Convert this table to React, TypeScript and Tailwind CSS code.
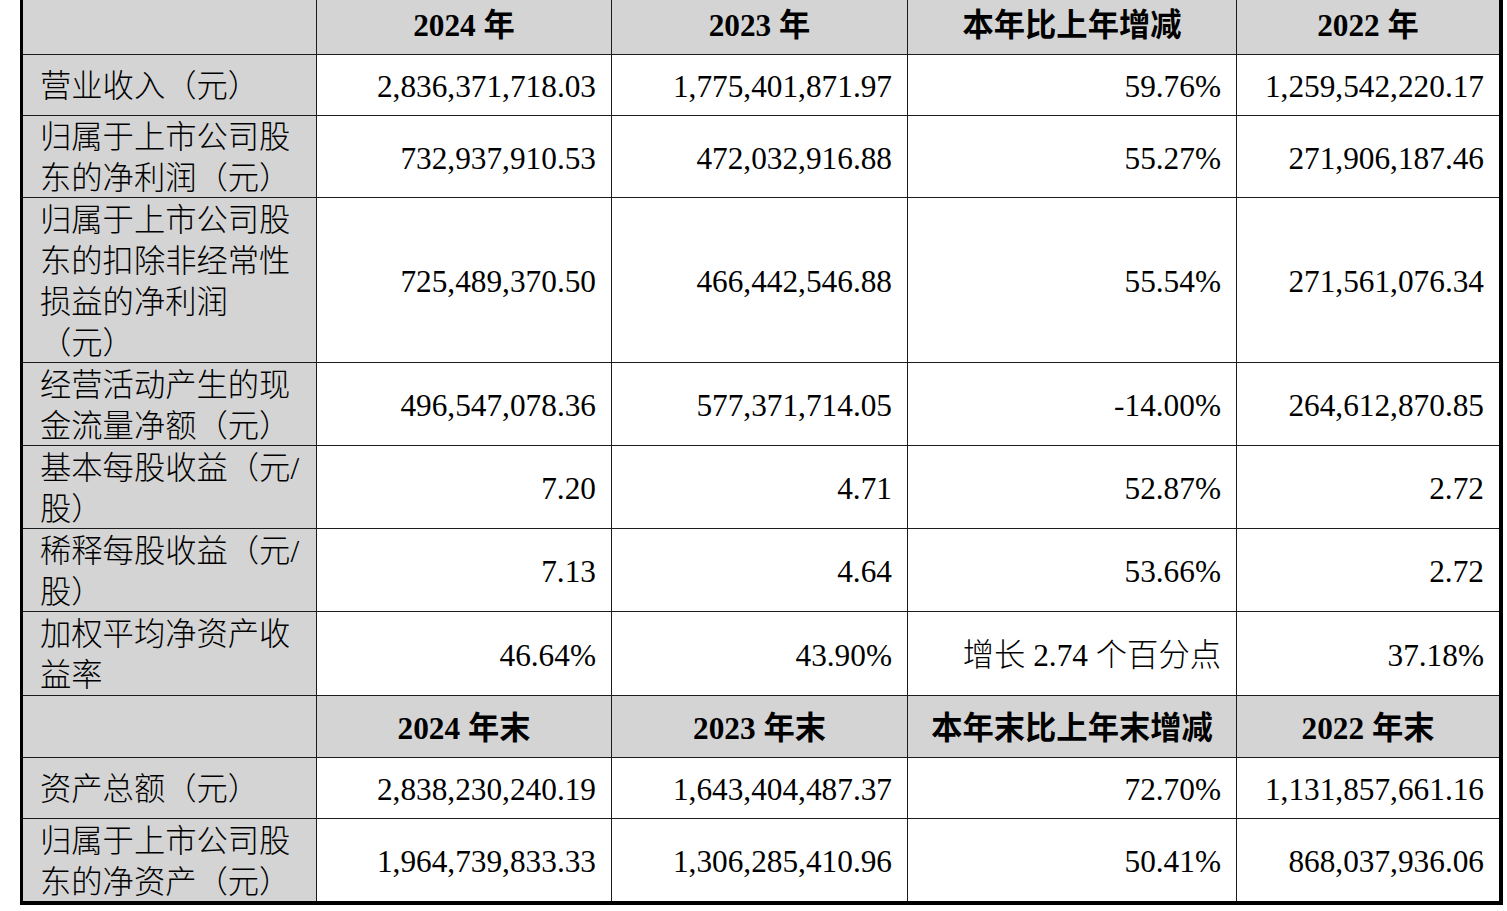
import React from "react";

type Row = {
  label: string[];
  values: string[];
  header?: boolean;
};

const rows: Row[] = [
  { label: [""], values: ["2024 年", "2023 年", "本年比上年增减", "2022 年"], header: true },
  { label: ["营业收入（元）"], values: ["2,836,371,718.03", "1,775,401,871.97", "59.76%", "1,259,542,220.17"] },
  { label: ["归属于上市公司股", "东的净利润（元）"], values: ["732,937,910.53", "472,032,916.88", "55.27%", "271,906,187.46"] },
  {
    label: ["归属于上市公司股", "东的扣除非经常性", "损益的净利润", "（元）"],
    values: ["725,489,370.50", "466,442,546.88", "55.54%", "271,561,076.34"],
  },
  { label: ["经营活动产生的现", "金流量净额（元）"], values: ["496,547,078.36", "577,371,714.05", "-14.00%", "264,612,870.85"] },
  { label: ["基本每股收益（元/", "股）"], values: ["7.20", "4.71", "52.87%", "2.72"] },
  { label: ["稀释每股收益（元/", "股）"], values: ["7.13", "4.64", "53.66%", "2.72"] },
  { label: ["加权平均净资产收", "益率"], values: ["46.64%", "43.90%", "增长 2.74 个百分点", "37.18%"] },
  { label: [""], values: ["2024 年末", "2023 年末", "本年末比上年末增减", "2022 年末"], header: true },
  { label: ["资产总额（元）"], values: ["2,838,230,240.19", "1,643,404,487.37", "72.70%", "1,131,857,661.16"] },
  { label: ["归属于上市公司股", "东的净资产（元）"], values: ["1,964,739,833.33", "1,306,285,410.96", "50.41%", "868,037,936.06"] },
];

export default function App() {
  return (
    <div
      className="w-[1507px] h-[911px] bg-white overflow-hidden text-black"
      style={{ fontFamily: '"Liberation Serif", "Noto Sans CJK SC", serif' }}
    >
      <div className="ml-[20px] w-[1483px] border-l-[3px] border-r-[4px] border-b-[4px] border-black box-border grid grid-cols-[294px_295px_296px_329px_262px] grid-rows-[55px_61px_82px_165px_83px_83px_83px_84px_62px_61px_82px] text-[31.3px] leading-[41px]">
        {rows.map((row, ri) => {
          const last = ri === rows.length - 1;
          const bb = last ? "" : "border-b border-[#1c1c1c]";
          const shift = ri === 0 ? "pb-[4px]" : "pt-[3px]";
          return (
            <React.Fragment key={ri}>
              <div
                className={`bg-[#d4d4d4] border-r border-[#1c1c1c] ${bb} ${shift} flex flex-col justify-center pl-[17px] font-light`}
              >
                {row.label.map((l, li) => (
                  <div key={li} className="whitespace-nowrap">
                    {l}
                  </div>
                ))}
              </div>
              {row.values.map((v, vi) => {
                const br = vi === row.values.length - 1 ? "" : "border-r border-[#1c1c1c]";
                if (row.header) {
                  return (
                    <div
                      key={vi}
                      className={`bg-[#d4d4d4] ${br} ${bb} ${shift} flex items-center justify-center font-bold whitespace-nowrap`}
                    >
                      {v}
                    </div>
                  );
                }
                return (
                  <div
                    key={vi}
                    className={`bg-white ${br} ${bb} ${shift} flex items-center justify-end pr-[15px] whitespace-nowrap font-light`}
                  >
                    {v}
                  </div>
                );
              })}
            </React.Fragment>
          );
        })}
      </div>
    </div>
  );
}
